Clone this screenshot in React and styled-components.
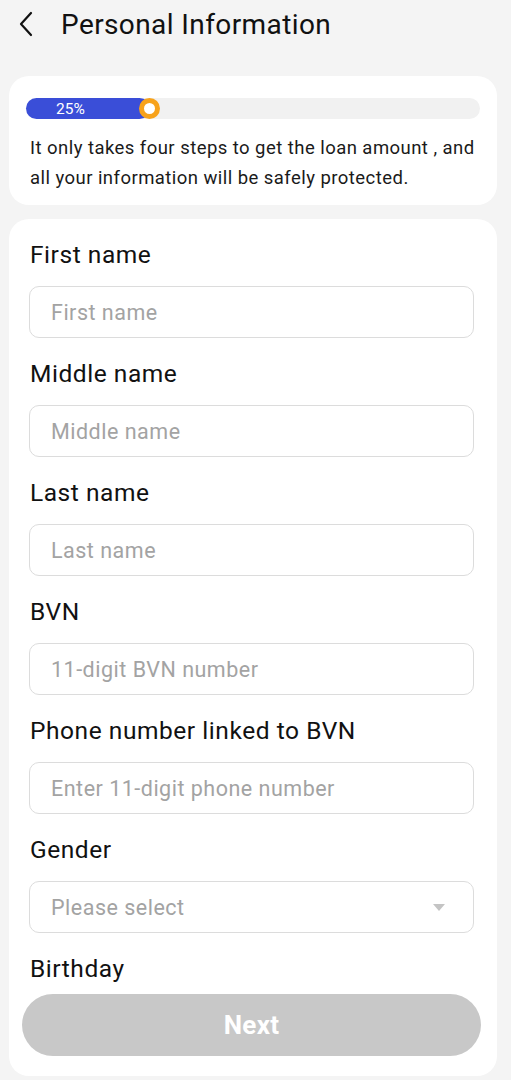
import React from 'react';
import styled, { createGlobalStyle } from 'styled-components';

const GlobalStyle = createGlobalStyle`
	body {
		margin: 0;
		background: #f4f4f4;
		font-family: Roboto, 'Liberation Sans', sans-serif;
		color: #111;
	}
`;

const Page = styled.div`
	padding: 0 14px 2px 9px;
`;

const Header = styled.div`
	display: flex;
	align-items: center;
	height: 48px;
	padding-left: 9px;
	gap: 27px;
	margin-bottom: 28px;
`;

const Title = styled.h1`
	margin: 0;
	font-size: 28px;
	font-weight: 400;
	letter-spacing: 0.4px;
	color: #111;
`;

const Card = styled.div`
	background: #fff;
	border-radius: 20px;
	padding: ${(p) => p.pad};
	margin-bottom: 14px;
`;

const Track = styled.div`
	position: relative;
	height: 21px;
	border-radius: 11px;
	background: #f1f1f1;
	margin-bottom: 14px;
`;

const Fill = styled.div`
	height: 100%;
	border-radius: 11px;
	background: #3a4ed8;
	color: #fff;
	font-size: 15.5px;
	display: flex;
	align-items: center;
	padding-left: 30px;
	box-sizing: border-box;
`;

const Knob = styled.div`
	position: absolute;
	top: 0;
	width: 21px;
	height: 21px;
	box-sizing: border-box;
	border-radius: 50%;
	border: 5px solid #f7a21b;
	background: #fff;
`;

const Note = styled.p`
	margin: 0;
	padding-left: 4px;
	font-size: 18.5px;
	letter-spacing: 0.45px;
	line-height: 30px;
	color: #1a1a1a;
`;

const Label = styled.div`
	font-size: 24.5px;
	letter-spacing: 0.55px;
	line-height: 28px;
	margin-top: 22px;
	margin-bottom: ${(p) => (p.last ? '11px' : '17px')};
	padding-left: 1px;
`;

const Field = styled.div`
	display: flex;
	align-items: center;
	justify-content: space-between;
	height: 52px;
	box-sizing: border-box;
	border: 1.5px solid #dcdcdc;
	border-radius: 10px;
	padding: 0 28px 0 21px;
	font-size: 21.5px;
	letter-spacing: 0.5px;
	color: #a3a3a3;
`;

const Caret = styled.span`
	width: 0;
	height: 0;
	border-left: 6px solid transparent;
	border-right: 6px solid transparent;
	border-top: 7px solid #c4c4c4;
`;

const NextButton = styled.button`
	margin: 0 -7px;
	height: 62px;
	border: none;
	border-radius: 31px;
	background: #c8c8c8;
	color: #fff;
	font-family: Roboto, 'Liberation Sans', sans-serif;
	font-size: 26px;
	font-weight: 700;
	letter-spacing: 0.3px;
`;

const FormCard = styled(Card)`
	display: flex;
	flex-direction: column;
	padding: 0 23px 20px 20px;
	margin-bottom: 0;
`;

const fields = [
	{ label: 'First name', hint: 'First name' },
	{ label: 'Middle name', hint: 'Middle name' },
	{ label: 'Last name', hint: 'Last name' },
	{ label: 'BVN', hint: '11-digit BVN number' },
	{ label: 'Phone number linked to BVN', hint: 'Enter 11-digit phone number' },
	{ label: 'Gender', hint: 'Please select', select: true },
];

export default function App() {
	const progress = 25;
	return (
		<Page>
			<GlobalStyle />
			<Header>
				<svg width="16" height="26" viewBox="0 0 16 26" fill="none">
					<path d="M13 2 L3 13 L13 24" stroke="#111" strokeWidth="2.2" strokeLinecap="round" strokeLinejoin="round" />
				</svg>
				<Title>Personal Information</Title>
			</Header>

			<Card pad="22px 17px 12px 17px">
				<Track>
					<Fill style={{ width: `${(progress / 100) * 454 + 10}px` }}>{progress}%</Fill>
					<Knob style={{ left: `${(progress / 100) * 454 - 1}px` }} />
				</Track>
				<Note>
					It only takes four steps to get the loan amount , and all your information will be safely
					protected.
				</Note>
			</Card>

			<FormCard>
				{fields.map((f) => (
					<React.Fragment key={f.label}>
						<Label>{f.label}</Label>
						<Field>
							{f.hint}
							{f.select && <Caret />}
						</Field>
					</React.Fragment>
				))}
				<Label last>Birthday</Label>
				<NextButton>Next</NextButton>
			</FormCard>
		</Page>
	);
}
